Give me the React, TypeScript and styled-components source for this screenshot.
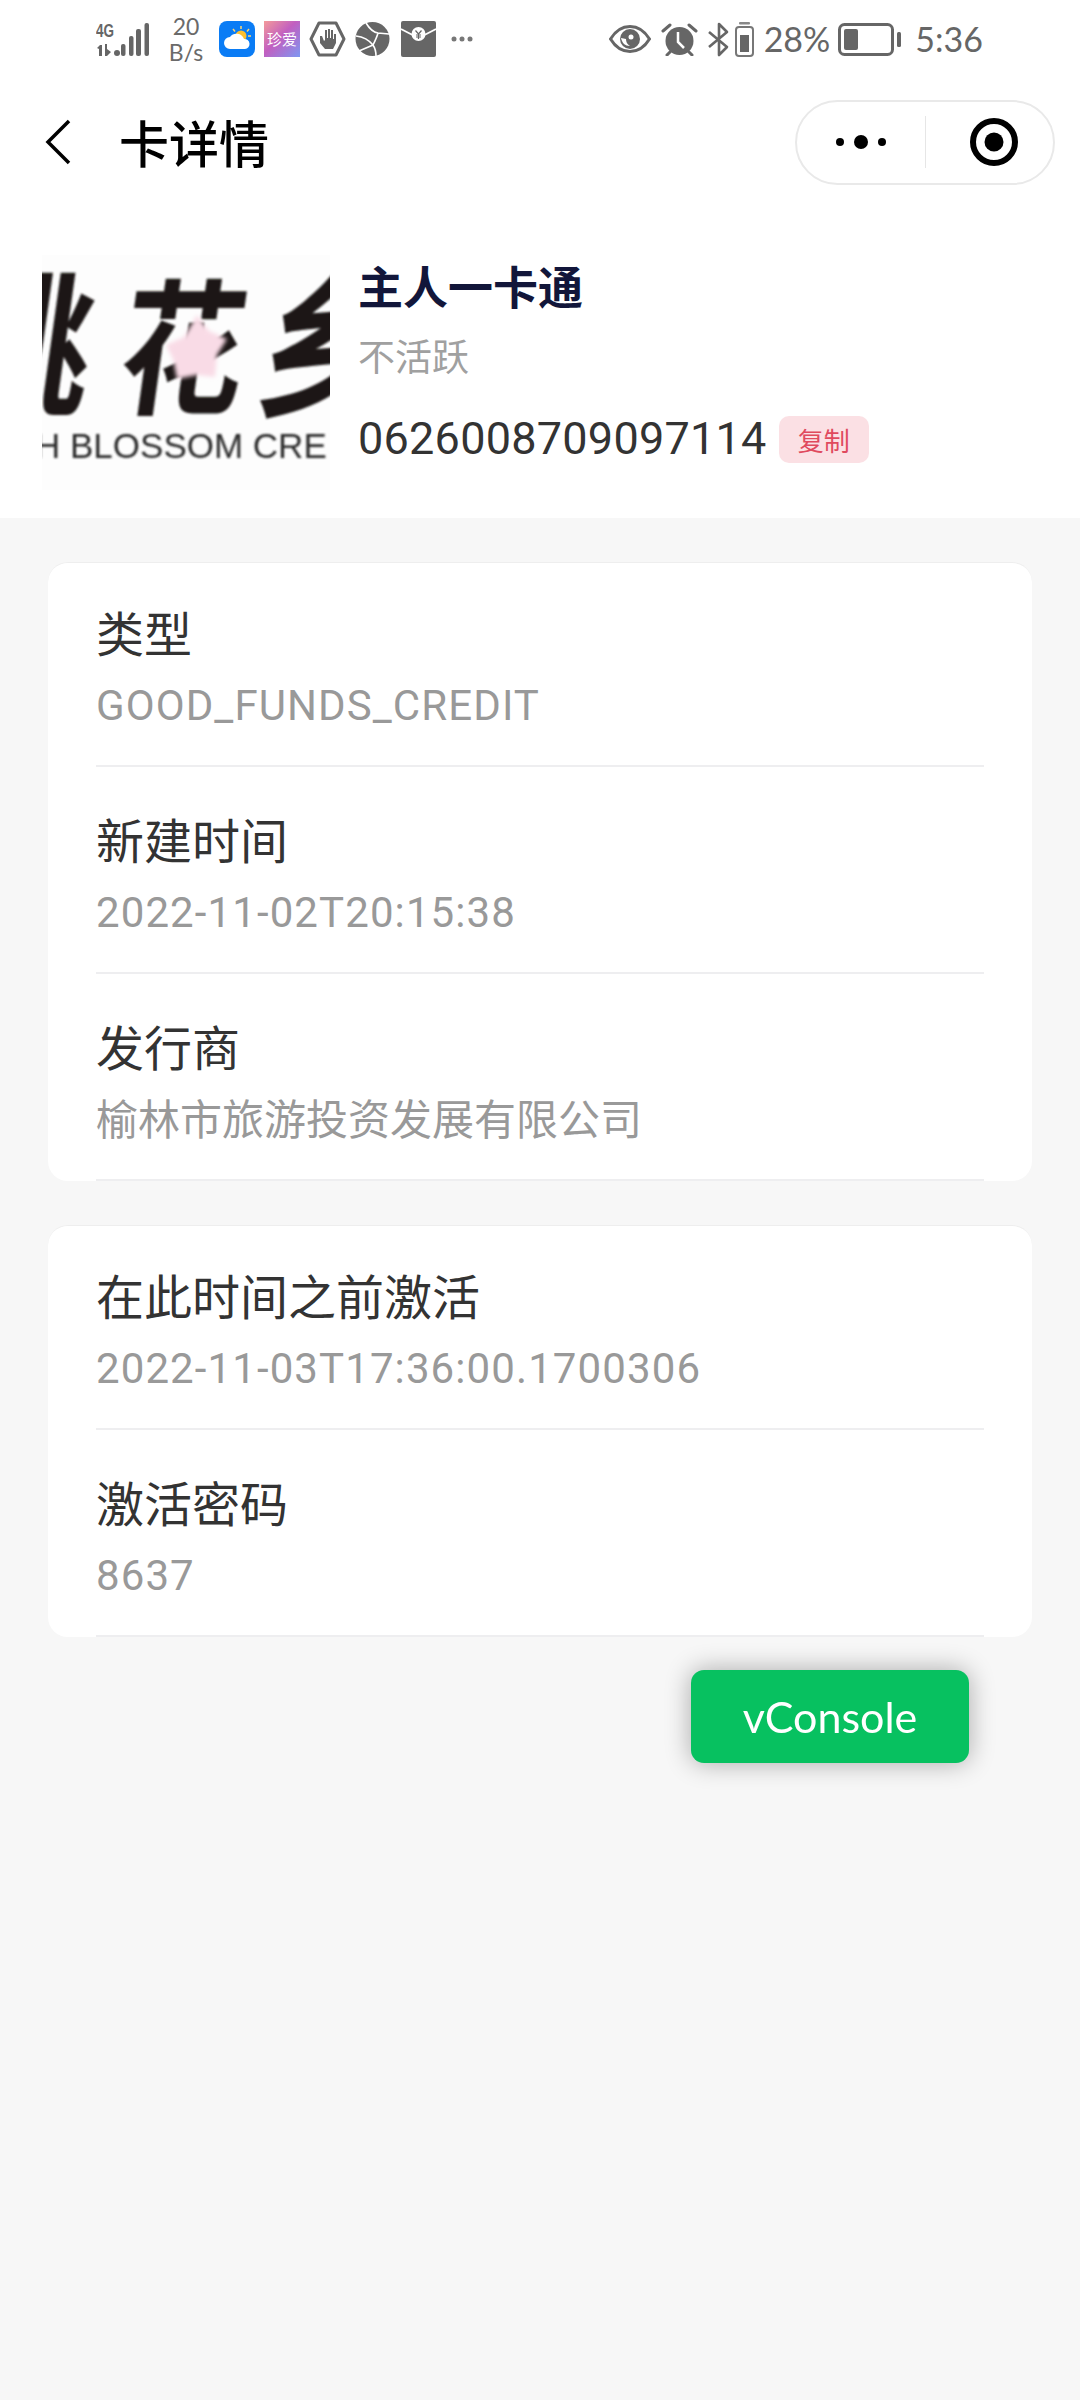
import React from "react";
import styled, { createGlobalStyle } from "styled-components";

const GlobalStyle = createGlobalStyle`
  html, body { margin: 0; padding: 0; background: #f7f7f7; }
  * { box-sizing: border-box; }
  body { font-family: Roboto, "Noto Sans CJK SC", sans-serif; }
`;

const Page = styled.div`
  width: 1080px;
  min-height: 2400px;
  background: #f7f7f7;
  position: relative;
`;

const TopPanel = styled.header`
  height: 518px;
  background: #fff;
  display: flex;
  flex-direction: column;
`;

const StatusBar = styled.div`
  height: 78px;
  padding: 0 97px 0 96px;
  display: flex;
  align-items: center;
  justify-content: space-between;
  color: #666;
`;

const StatusGroup = styled.div`
  display: flex;
  align-items: center;
`;

const NetSpeed = styled.div`
  width: 52px;
  margin: 0 7px 0 11px;
  display: flex;
  flex-direction: column;
  align-items: center;
  font: 400 23px/26px Lato, sans-serif;
  color: #6a6a6a;
`;

const TinyIcon = styled.svg<{ $gap?: number }>`
  display: block;
  flex: none;
  margin-right: ${(p) => p.$gap ?? 0}px;
`;

const StatusText = styled.span<{ $gap?: number }>`
  font: 400 34px/40px Lato, sans-serif;
  color: #666;
  margin-right: ${(p) => p.$gap ?? 0}px;
`;

const NavBar = styled.div`
  height: 128px;
  padding: 0 25px 0 45px;
  display: flex;
  align-items: center;
`;

const NavTitle = styled.h1`
  flex: 1;
  margin: 0 0 3px 48px;
  font: 500 50px/60px "Noto Sans CJK SC", sans-serif;
  color: #000;
`;

const Capsule = styled.div`
  width: 260px;
  height: 85px;
  border: 2px solid #e9e9e9;
  border-radius: 43px;
  display: flex;
  align-items: center;
`;

const CapsulePart = styled.div`
  flex: 0 0 50%;
  height: 52px;
  display: flex;
  align-items: center;
  justify-content: center;
  & + & {
    border-left: 1px solid #e6e6e6;
    padding-left: 8px;
  }
`;

const CardHead = styled.section`
  flex: 1;
  padding: 49px 0 0 42px;
  display: flex;
  align-items: flex-start;
  gap: 28px;
`;

const Logo = styled.svg`
  display: block;
  flex: none;
`;

const HeadInfo = styled.div`
  display: flex;
  flex-direction: column;
  padding-top: 3px;
`;

const CardName = styled.div`
  font: 700 45px/56px "Noto Sans CJK SC", sans-serif;
  color: #12163a;
`;

const CardState = styled.div`
  margin-top: 12px;
  font: 400 37px/58px "Noto Sans CJK SC", sans-serif;
  color: #a0a0a0;
`;

const NumberRow = styled.div`
  margin-top: 24px;
  display: flex;
  align-items: center;
  gap: 12px;
`;

const CardNumber = styled.span`
  font: 400 45px/62px Roboto, sans-serif;
  letter-spacing: 0.25px;
  color: #333;
`;

const CopyTag = styled.span`
  width: 90px;
  height: 47px;
  border-radius: 10px;
  background: #fbe0e4;
  color: #e04a5e;
  font: 400 26px/47px "Noto Sans CJK SC", sans-serif;
  text-align: center;
`;

const Body = styled.main`
  padding: 44px 48px 0;
  display: flex;
  flex-direction: column;
  gap: 44px;
`;

const Card = styled.section`
  background: #fff;
  border-radius: 20px;
  border-top: 1px solid #eeeeee;
  overflow: hidden;
  padding: 0 48px;
`;

const Row = styled.div`
  height: 207px;
  border-bottom: 2px solid #eeeef0;
  padding-top: 37px;
  &:first-child { height: 204px; padding-top: 34px; }
`;

const Label = styled.div`
  font: 400 48px/68px "Noto Sans CJK SC", sans-serif;
  color: #333;
`;

const Value = styled.div`
  margin-top: 8px;
  font: 400 42px/60px "Noto Sans CJK SC", sans-serif;
  color: #999;
`;

const LatinValue = styled(Value)`
  margin-top: 11px;
  font-family: Roboto, sans-serif;
  letter-spacing: 1.1px;
`;

const VConsole = styled.button`
  position: fixed;
  left: 691px;
  top: 1670px;
  width: 278px;
  height: 93px;
  border: 0;
  border-radius: 13px;
  background: #07c160;
  color: #fff;
  font: 400 43px/91px Lato, sans-serif;
  padding: 0;
  box-shadow: 0 0 26px rgba(0, 0, 0, 0.32);
`;

const Signal = () => (
  <TinyIcon width="53" height="36" viewBox="0 0 53 36" fill="#666">
    <text x="0" y="16" fontFamily="'Liberation Sans', sans-serif" fontWeight="700" fontSize="19" textLength="18" lengthAdjust="spacingAndGlyphs">4G</text>
    <path d="M1 27l3-3h2v11H3v-7zM9 23h2v5l4 3-4 4h-2z" />
    <circle cx="21" cy="32" r="3" />
    <rect x="25" y="23" width="4.500" height="12" rx="2" />
    <rect x="33" y="15" width="4.500" height="20" rx="2" />
    <rect x="40" y="8" width="5" height="27" rx="2" />
    <rect x="48.500" y="2" width="4.500" height="33" rx="2" />
  </TinyIcon>
);

const Weather = () => (
  <TinyIcon width="36" height="36" viewBox="0 0 36 36" $gap={9}>
    <rect width="36" height="36" rx="8" fill="#0a7cf5" />
    <circle cx="22" cy="15" r="5.500" fill="#ffc02e" />
    <path d="M22 5v3M14 8l2 2.500M30 8l-2 2.500M32 15h-3" stroke="#ffd670" strokeWidth="1.500" />
    <path d="M11 28a6 6 0 0 1 0-12 8 8 0 0 1 14 2 5 5 0 0 1 1 10z" fill="#fff" />
  </TinyIcon>
);

const Zhenai = () => (
  <TinyIcon width="36" height="36" viewBox="0 0 36 36" $gap={9}>
    <defs>
      <linearGradient id="za" x1="0" y1="0" x2="1" y2="1">
        <stop offset="0" stopColor="#f49a9a" />
        <stop offset="0.45" stopColor="#c25fc0" />
        <stop offset="1" stopColor="#7d97f2" />
      </linearGradient>
    </defs>
    <rect width="36" height="36" fill="url(#za)" />
    <text x="18" y="24" textAnchor="middle" fill="#fff" fontSize="15" fontFamily="'Noto Sans CJK SC', sans-serif">珍爱</text>
  </TinyIcon>
);

const HandStop = () => (
  <TinyIcon width="37" height="36" viewBox="0 0 37 36" $gap={9}>
    <path d="M10 2h17l8 16-8 16H10L2 18z" fill="none" stroke="#666" strokeWidth="3" strokeLinejoin="round" />
    <path d="M11 15v7l5 6h8l3-6v-9h-2v5h-1V9h-2v8h-1V8h-2v9h-1V9h-2v10l-1 1-2-5z" fill="#666" />
  </TinyIcon>
);

const Globe = () => (
  <TinyIcon width="35" height="36" viewBox="0 0 35 36" $gap={11}>
    <circle cx="17.500" cy="18" r="17" fill="#666" />
    <path d="M1 15c8 1 13 4 17 9 2 3 3 7 3 11M11 2c3 5 6 9 12 10l11 1M23 12c-1 4-3 8-5 12M18 24L4 30" stroke="#fff" strokeWidth="1.600" fill="none" />
  </TinyIcon>
);

const RedPacket = () => (
  <TinyIcon width="35" height="36" viewBox="0 0 35 36" $gap={15}>
    <path d="M2 0h31a2 2 0 0 1 2 2v32a2 2 0 0 1-2 2H2a2 2 0 0 1-2-2V2a2 2 0 0 1 2-2z" fill="#666" />
    <path d="M0 8l17.500 9L35 8" stroke="#fff" strokeWidth="1.600" fill="none" />
    <circle cx="17.500" cy="13" r="7" fill="#fff" />
    <path d="M14.500 9.500l3 3.500 3-3.500M17.500 13v5M15 14h5M15 16h5" stroke="#666" strokeWidth="1.200" fill="none" />
  </TinyIcon>
);

const More = () => (
  <TinyIcon width="22" height="6" viewBox="0 0 22 6" fill="#777">
    <circle cx="3" cy="3" r="2.500" />
    <circle cx="11" cy="3" r="2.500" />
    <circle cx="19" cy="3" r="2.500" />
  </TinyIcon>
);

const Eye = () => (
  <TinyIcon width="42" height="28" viewBox="0 0 42 28" $gap={10}>
    <path d="M1.500 14C7 5 14 1.500 21 1.500S35 5 40.500 14C35 23 28 26.500 21 26.500S7 23 1.500 14z" fill="none" stroke="#666" strokeWidth="3" />
    <circle cx="21" cy="14" r="10" fill="#666" />
    <path d="M12 13c1 5 4 8 9 8-3-2-4-4-4-7z" fill="#fff" />
    <circle cx="22" cy="12" r="2.500" fill="#fff" />
  </TinyIcon>
);

const Alarm = () => (
  <TinyIcon width="37" height="33" viewBox="0 0 37 33" $gap={10}>
    <circle cx="18.500" cy="18" r="14" fill="#666" />
    <path d="M2 8l7-6M35 8l-7-6M6 32l3-3M31 32l-3-3" stroke="#666" strokeWidth="3" strokeLinecap="round" />
    <path d="M17 9v10l6 6" stroke="#fff" strokeWidth="2.500" fill="none" />
  </TinyIcon>
);

const Bluetooth = () => (
  <TinyIcon width="22" height="35" viewBox="0 0 22 35" $gap={5}>
    <path d="M1 10l18 15-8 8V2l8 8L1 25" fill="none" stroke="#666" strokeWidth="2.600" strokeLinejoin="round" />
  </TinyIcon>
);

const SmallBattery = () => (
  <TinyIcon width="19" height="35" viewBox="0 0 19 35" $gap={10}>
    <rect x="4" y="0" width="11" height="2.500" rx="1" fill="#888" />
    <rect x="1" y="5" width="17" height="29" rx="3" fill="none" stroke="#777" strokeWidth="2" />
    <rect x="5" y="13" width="9" height="17" fill="#666" />
  </TinyIcon>
);

const BigBattery = () => (
  <TinyIcon width="63" height="33" viewBox="0 0 63 33" $gap={14}>
    <rect x="1.500" y="1.500" width="53" height="30" rx="5" fill="none" stroke="#666" strokeWidth="3" />
    <rect x="6" y="6" width="14" height="21" rx="2" fill="#666" />
    <rect x="59" y="9" width="4" height="15" rx="1.500" fill="#666" />
  </TinyIcon>
);

const Chevron = () => (
  <TinyIcon width="26" height="46" viewBox="0 0 26 46">
    <path d="M24 2L3 23l21 21" fill="none" stroke="#000" strokeWidth="3.500" />
  </TinyIcon>
);

const CapsuleDots = () => (
  <TinyIcon width="52" height="14" viewBox="0 0 52 14" fill="#000">
    <circle cx="5" cy="7" r="4" />
    <circle cx="26" cy="7" r="7" />
    <circle cx="47" cy="7" r="4" />
  </TinyIcon>
);

const CapsuleTarget = () => (
  <TinyIcon width="48" height="48" viewBox="0 0 48 48">
    <circle cx="24" cy="24" r="21" fill="none" stroke="#000" strokeWidth="6" />
    <circle cx="24" cy="24" r="9.500" fill="#000" />
  </TinyIcon>
);

const LogoArt = () => (
  <Logo width="288" height="235" viewBox="0 0 288 235">
    <defs>
      <filter id="soft"><feGaussianBlur stdDeviation="0.800" /></filter>
      <filter id="softer"><feGaussianBlur stdDeviation="2" /></filter>
    </defs>
    <rect width="288" height="235" fill="#fdfdfd" />
    <g filter="url(#soft)" fill="#1c1816" fontFamily="'Noto Sans CJK SC', sans-serif" fontWeight="700">
      <text transform="translate(-88 148) skewX(-8) scale(1 1.18)" fontSize="130">桃</text>
      <text transform="translate(72 148) skewX(-8) scale(1 1.18)" fontSize="124">花</text>
      <text transform="translate(210 150) skewX(-8) scale(1 1.18)" fontSize="130">乡</text>
    </g>
    <text x="-7" y="203" fontFamily="'Liberation Sans', sans-serif" fontSize="35" fill="#2a2a2a" filter="url(#soft)">H BLOSSOM CRE</text>
    <path d="M155 60l12 16 18 8-10 16-2 22-18-2-20 4-4-20-7-14 18-8z" fill="#f9dbe6" filter="url(#softer)" />
  </Logo>
);

export default function App() {
  return (
    <Page>
      <GlobalStyle />
      <TopPanel>
        <StatusBar>
          <StatusGroup>
            <Signal />
            <NetSpeed>
              <span>20</span>
              <span>B/s</span>
            </NetSpeed>
            <Weather />
            <Zhenai />
            <HandStop />
            <Globe />
            <RedPacket />
            <More />
          </StatusGroup>
          <StatusGroup>
            <Eye />
            <Alarm />
            <Bluetooth />
            <SmallBattery />
            <StatusText $gap={8}>28%</StatusText>
            <BigBattery />
            <StatusText>5:36</StatusText>
          </StatusGroup>
        </StatusBar>
        <NavBar>
          <Chevron />
          <NavTitle>卡详情</NavTitle>
          <Capsule>
            <CapsulePart>
              <CapsuleDots />
            </CapsulePart>
            <CapsulePart>
              <CapsuleTarget />
            </CapsulePart>
          </Capsule>
        </NavBar>
        <CardHead>
          <LogoArt />
          <HeadInfo>
            <CardName>主人一卡通</CardName>
            <CardState>不活跃</CardState>
            <NumberRow>
              <CardNumber>0626008709097114</CardNumber>
              <CopyTag>复制</CopyTag>
            </NumberRow>
          </HeadInfo>
        </CardHead>
      </TopPanel>
      <Body>
        <Card>
          <Row>
            <Label>类型</Label>
            <LatinValue>GOOD_FUNDS_CREDIT</LatinValue>
          </Row>
          <Row>
            <Label>新建时间</Label>
            <LatinValue>2022-11-02T20:15:38</LatinValue>
          </Row>
          <Row>
            <Label>发行商</Label>
            <Value>榆林市旅游投资发展有限公司</Value>
          </Row>
        </Card>
        <Card>
          <Row>
            <Label>在此时间之前激活</Label>
            <LatinValue>2022-11-03T17:36:00.1700306</LatinValue>
          </Row>
          <Row>
            <Label>激活密码</Label>
            <LatinValue>8637</LatinValue>
          </Row>
        </Card>
      </Body>
      <VConsole>vConsole</VConsole>
    </Page>
  );
}
